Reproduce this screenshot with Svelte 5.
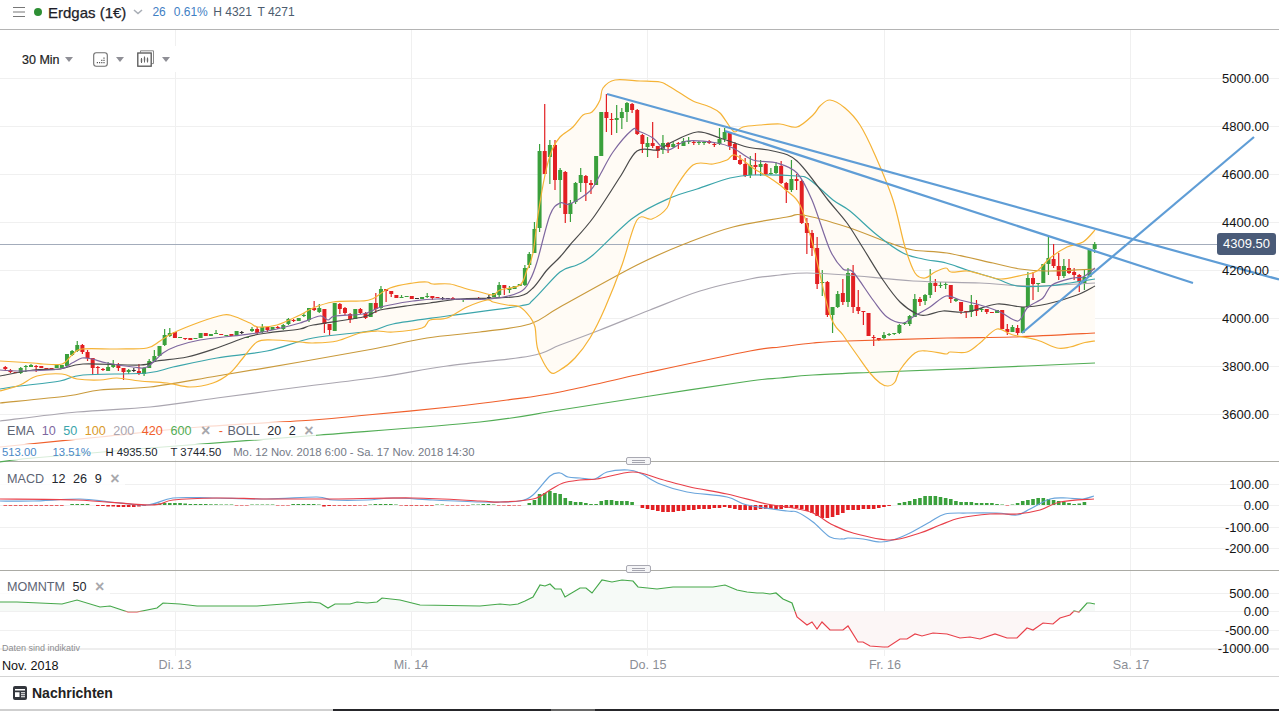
<script>
  // candle rows: colour, body top, body bottom, wick high, wick low (page y)
  const candleStep = 5.14;
  const candleRuns = [
    {
      x0: 5.3,
      rows: `r 367 369 366 371|r 370 372 369 373|r 372 373|g 368 373 367 374|g 366 367 365 372|g 365 367 364 367|r 366 367 365 372|r 366 368|r 368 369|r 368 369|g 364 368|g 365 368|g 354 366|g 351 355 350 356|g 345 351 341 352|r 345 352 344 354|r 352 358 350 361|r 358 368 358 375|r 367 368 366 374|r 369 370 368 371|g 367 371 362 371|g 364 367 360 368|r 365 368 363 371|r 368 372 368 380|g 370 372 369 374|k 370 371 368 372|r 371 373 364 375|g 368 374 367 376|g 361 368 359 368|g 356 361 350 362|g 346 356|g 335 345 329 346|g 333 336 328 337|r 332 338|g 337 338|r 338 339 338 340|r 338 340|g 338 339|g 333 338|r 333 336|g 334 336|g 333 334 330 334|r 334 335|g 335 336|r 334 336|g 331 336|k 332 333 331 334|g 337 338|g 329 331 327 332|r 329 333 327 334|g 327 332 324 333|r 327 330 327 332|g 327 330|r 327 328 326 329`,
    },
    {
      x0: 283.3,
      rows: `g 325 329 324 330|g 319 324 318 325|r 320 321 319 322|g 318 321|g 315 316 313 317|g 308 320 308 322|r 308 310 301 311|g 308 312 304 313|r 309 324 309 333|r 324 330 324 335|g 303 331|r 304 309 303 314|r 308 313 307 315|r 314 319 313 323|g 309 319|r 309 313 308 314|r 313 318 312 319|g 303 317|r 303 309 293 313|g 289 308 286 309|r 289 291 289 302|r 291 294 291 297|r 295 298|g 297 298 295 298|g 296 297|r 296 299|k 298 299|g 297 299|g 296 297 293 298|r 296 298 296 300|r 297 298|k 298 299 297 300|k 298 299|r 298 300 297 300|k 299 300|g 299 300 299 302|k 298 299|k 298 299|r 298 299 297 300|k 298 299|k 297 298 295 299|g 293 297|g 285 295 282 297|r 285 288 285 295|g 288 290 286 293|g 286 289|g 284 286|g 268 285 265 286`,
    },
    {
      x0: 529.3,
      rows: `g 254 265 252 268|g 229 253 222 253|g 151 228 144 232|r 151 174 104 174|g 145 157 140 184|r 145 180 140 190|g 170 180 168 208|r 172 214 171 223|g 203 214 200 222|g 183 202 182 204|g 175 183 168 192|r 176 183 175 201|r 183 185 180 194|g 156 185|g 112 156|r 112 118 94 132|r 119 120 113 135|g 118 120 105 133|g 112 118 108 129|g 103 112 102 122|r 104 110 103 113|r 110 134 109 135|r 135 144 134 153|g 143 147 137 157|r 143 146 122 148|r 146 151 146 158|g 143 150 135 154|r 143 147 142 153|g 144 147 142 148|r 143 144 142 149|g 141 146 138 146|g 141 142 137 144|r 142 143 141 145|g 142 143 141 145|g 142 143 141 145|r 141 143 140 144|r 144 145 142 147|g 139 144 128 145|g 132 139 128 142|r 133 146 132 150|r 144 160 142 160|r 160 164 155 165|r 164 176 158 177|g 165 175 156 178|r 165 167 153 175|g 164 167 160 176|r 164 174 163 175|g 173 174 168 175|g 166 173 162 174|r 166 183 161 184|r 183 190 182 203|g 179 190 160 192|r 179 181 174 190|r 181 223 180 224|r 223 233 218 254|r 233 248 230 256|r 248 284 237 289|g 282 283 270 296|r 282 315 281 317|g 307 315 307 333|g 294 307 291 308|r 293 302 279 305|g 273 302 268 307|r 273 307 265 313|r 307 311 290 314|r 311 312 311 325|r 313 336|r 337 338 335 346|r 338 340 338 341|g 335 338 332 339|g 334 335 333 336|g 333 334 333 335|g 325 333 324 334|g 323 324 322 325|g 316 324 315 326|g 299 317 294 317|r 299 302 297 306|g 295 301 294 305|g 283 295 269 298|r 283 286 279 292|g 285 286 282 288|g 284 285 282 289|r 285 299 285 303|g 299 301 298 302|r 302 311 302 314|r 311 312 311 318|g 305 312 295 317|r 305 311 300 316|g 309 310 308 312|r 309 312 309 314|r 312 313|g 310 313|r 310 329|r 329 332 324 335|g 327 332 325 332|r 328 333 325 335|g 307 333|g 278 307 272 308|r 278 284 272 300|g 283 284 283 292|g 264 283|g 258 264 235 275|r 259 266 244 268|r 266 276 253 280|g 266 276 259 278|r 268 273 259 274|r 272 275 268 280|r 275 282 274 292|g 277 283 270 290|g 249 277|g 244 249 242 253`,
    },
  ];

  const candleColors = { g: "#3aa03c", r: "#e21f23", k: "#333" };

  const candles = candleRuns.flatMap((run) =>
    run.rows.split("|").map((row, i) => {
      const [c, top, bottom, high, low] = row.split(" ");
      return {
        x: run.x0 + candleStep * i,
        color: candleColors[c],
        top: +top,
        height: Math.max(1, bottom - top),
        high: high ? +high : +top,
        low: low ? +low : +bottom,
      };
    }),
  );

  const bollUpper = "0,361 33,363 43,364 62,364 72,355 82,349 117,349 147,348 160,341 173,333 200,322 223,315 233,316 250,323 258,327 277,325 300,315 313,308 333,302 360,301 372,299 390,288 413,283 427,282 433,284 450,284 467,289 480,292 493,295 500,290 520,285 527,270 533,253 538,215 545,175 552,150 560,137 573,127 583,115 592,112 600,100 603,88 615,80 640,81 660,82 667,85 680,93 693,101 710,107 720,113 730,127 735,132 743,127 760,125 780,124 797,127 813,115 820,106 830,100 845,108 860,125 875,155 893,200 905,247 915,273 925,278 935,272 946,268 951,272 967,271 980,274 1000,279 1023,275 1037,271 1050,258 1067,247 1083,242 1095,230";
  const bollLower = "0,391 20,385 37,376 62,374 77,379 100,380 117,378 140,381 167,383 190,387 213,383 230,373 243,358 257,342 273,340 300,342 313,343 337,341 360,333 377,331 393,332 422,328 430,320 447,318 467,307 487,300 493,302 507,305 520,307 530,317 535,327 538,350 550,372 560,370 575,358 590,338 605,308 622,265 637,220 652,219 667,208 673,192 693,165 713,164 727,160 735,155 753,168 773,180 787,191 800,205 813,245 830,315 843,335 857,355 870,373 880,383 888,386 895,382 900,370 915,353 927,351 946,354 950,352 967,352 980,343 997,329 1013,335 1037,340 1057,348 1070,347 1083,343 1095,341";

  const priceLines = [
    { color: "#aaa6b0", pts: "0,421 77,412 150,407 217,398 300,387 380,377 447,366 530,356 560,345 600,330 650,310 700,291 750,279 780,275 807,273 847,275 913,281 980,283 1030,286 1095,283" },
    { color: "#f0602c", pts: "0,447 100,437 200,427 313,420 367,415 450,407 507,400 560,392 650,372 750,351 780,347 813,343 847,341 947,338 1013,337 1095,333" },
    { color: "#52ad55", pts: "0,462 33,458 150,448 320,435 480,422 560,410 650,396 750,381 780,378 813,375 880,372 980,368 1095,363" },
    { color: "#c99a3c", pts: "0,403 67,396 100,390 150,387 217,376 300,362 373,349 427,338 480,332 530,324 560,307 637,265 687,243 733,227 787,217 803,215 847,227 887,242 913,250 947,253 993,263 1020,269 1047,271 1095,269" },
    { color: "#3ba5ab", pts: "0,389 20,386 60,381 83,375 147,373 173,367 217,358 267,351 313,338 370,331 393,324 447,316 520,306 533,300 560,272 577,265 593,255 633,218 670,198 697,189 730,178 753,175 797,176 810,180 833,200 850,211 877,235 903,253 923,259 946,263 967,270 997,279 1017,286 1047,286 1070,283 1095,279" },
    { color: "#4a4a4a", pts: "0,376 33,370 60,369 83,364 140,365 157,361 187,357 217,348 247,337 267,333 300,329 313,325 363,317 380,310 413,305 430,303 460,299 493,298 520,296 533,288 547,270 560,257 570,245 593,218 620,177 637,151 658,150 670,143 697,132 720,138 747,147 773,151 797,161 828,200 847,223 863,248 883,280 900,302 917,314 927,315 943,311 967,312 997,304 1023,307 1047,304 1077,295 1095,286" },
    { color: "#7e679f", pts: "0,370 20,371 60,369 72,363 82,358 92,359 107,363 133,367 147,367 163,353 177,346 200,340 233,336 257,333 277,329 300,323 320,316 328,320 335,316 363,314 378,308 390,305 413,301 437,299 490,299 520,292 530,280 537,262 550,215 560,203 570,204 590,191 600,175 613,152 632,130 638,131 653,138 667,150 687,141 717,143 733,148 753,160 777,163 797,173 812,200 830,250 843,269 853,272 873,300 887,317 903,323 913,317 930,307 946,296 960,300 980,305 1000,312 1018,321 1028,307 1043,298 1052,285 1073,278 1083,277 1095,268" },
    { color: "#f5b336", pts: bollUpper },
    { color: "#f5b336", pts: bollLower },
  ];

  const macdBlue = "0,501 33,501 80,499 110,502 147,505 173,498 213,498 267,499 317,497 333,500 367,500 393,498 433,500 480,502 500,502 520,501 533,495 550,476 560,473 568,477 580,478 595,479 607,472 628,470 640,473 660,484 687,492 727,497 747,505 787,511 797,512 813,522 830,537 843,539 848,538 863,539 880,542 893,540 910,533 930,522 945,514 967,513 997,513 1017,515 1030,509 1050,499 1067,498 1083,499 1094,496";
  const macdRed = "0,499 77,500 150,505 173,500 217,498 267,499 333,499 413,498 480,501 500,502 533,499 550,490 563,483 580,480 597,479 633,472 660,479 690,487 727,494 767,504 793,508 813,513 833,525 853,533 890,540 920,533 940,525 960,518 990,514 1017,514 1040,510 1060,502 1094,499";

  const momentum = "0,602 17,602 62,604 77,600 100,607 110,606 128,612 137,612 157,608 163,603 180,604 197,606 257,606 310,602 320,603 328,608 335,604 350,604 357,602 367,603 377,602 382,598 400,600 420,605 480,606 500,604 510,605 518,604 525,601 533,597 540,585 545,586 550,584 555,589 561,589 565,597 580,588 586,588 592,593 602,580 612,582 622,580 633,581 638,587 657,589 673,587 713,587 725,585 737,590 747,592 757,593 763,593 770,594 776,593 783,599 792,603 797,617 807,625 812,622 817,629 822,622 830,630 843,630 848,626 858,642 863,642 870,646 883,647 888,647 900,639 907,639 915,634 922,636 933,633 947,634 960,638 970,637 980,639 995,634 1007,638 1017,638 1027,628 1033,630 1043,623 1053,624 1060,618 1070,615 1074,611 1079,612 1087,603 1090,603 1095,604";

  const histLeft = [-0.7, -0.7, -0.7, -0.7, -0.7, -0.7, -0.7, -0.7, -0.7, -0.7, -0.7, -0.7, 0, 1, 1, 1, 1, 0, -1, -1, -1.5, -1.5, -2, -2, -2, -2, -1.5, -1, 0, 1, 1.5, 2, 2, 2, 2, 1.5, 1, 1, 1, 1, 0.7, 0.7, 0.5, 0.5, 0.5, -0.5, -0.5, -0.5, 0.5, 0.5, 0.5, 0.5, 0.5, -0.5, -0.5, -0.5, 1, 1, 1, 1, 1, 0.5, -1.5, -1, -0.7, -0.7, -0.7, -0.7, -0.7, -0.5, -0.5, 0.5, 1, 1, 1, 1, 0.5, -0.5, -0.7, -0.7, -0.7, -0.7, -0.7, -0.7, 0.5, 0.5, -0.5, -0.5, -0.5, -0.5, -0.5, 0.5, 0.5, 1, 1, 0.5, -0.5, -0.5, -0.7, -0.5, -0.5];
  const histMain = [2, 5, 11, 12, 14, 12, 11, 7, 4, 3, 3, 2, 1, 1, 4, 5, 5, 4, 4, 4, 3, 0, -3, -4, -5, -6, -7, -7, -7, -6, -6, -5, -5, -4, -4, -4, -3, -3, -2, -3, -4, -5, -5, -5, -5, -4, -4, -4, -4, -4, -3, -3, -3, -4, -6, -8, -11, -13, -13, -12, -10, -8, -5, -5, -5, -4, -4, -4, -3, -2, -1, 0, 2, 3, 4, 6, 7, 9, 9, 9, 8, 7, 6, 4, 3, 3, 3, 2, 2, 2, 2, 1, 0.5, -0.5, 0.5, 2, 4, 5, 6, 7, 7, 6, 5, 4, 3, 2, 1, 1.5, 3];

  const histBars = [
    ...histLeft.map((v, i) => ({ x: 5.3 + candleStep * i, v })),
    ...histMain.map((v, i) => ({ x: 529.3 + candleStep * i, v })),
  ].filter((b) => b.v !== 0);

  const priceTicks = [
    [78, "5000.00"], [126, "4800.00"], [174, "4600.00"], [222, "4400.00"],
    [270, "4200.00"], [318, "4000.00"], [366, "3800.00"], [414, "3600.00"],
  ];
  const macdTicks = [[484, "100.00"], [505, "0.00"], [527, "-100.00"], [548, "-200.00"]];
  const momTicks = [[593, "500.00"], [611, "0.00"], [630, "-500.00"], [648, "-1000.00"]];
  const dayLines = [175.5, 411.5, 647.5, 884.5, 1130.5];
  const dayLabels = [[175, "Di. 13"], [411, "Mi. 14"], [648, "Do. 15"], [885, "Fr. 16"], [1131, "Sa. 17"]];

  // catmull-rom through the read-off points, so the curves don't look like polygons
  function smooth(str) {
    const p = str.split(" ").map((s) => s.split(",").map(Number));
    let d = `M${p[0][0]} ${p[0][1]}`;
    for (let i = 0; i < p.length - 1; i++) {
      const a = p[i - 1] || p[i];
      const b = p[i];
      const c = p[i + 1];
      const e = p[i + 2] || c;
      const c1x = b[0] + (c[0] - a[0]) / 6;
      const c1y = b[1] + (c[1] - a[1]) / 6;
      const c2x = c[0] - (e[0] - b[0]) / 6;
      const c2y = c[1] - (e[1] - b[1]) / 6;
      d += `C${c1x.toFixed(1)} ${c1y.toFixed(1)} ${c2x.toFixed(1)} ${c2y.toFixed(1)} ${c[0]} ${c[1]}`;
    }
    return d;
  }

  const band = `${bollUpper} ${bollLower.split(" ").reverse().join(" ")}`;
  const momArea = `0,611 ${momentum} 1095,611`;
</script>

<div class="page">
  <header class="topbar">
    <svg class="burger" width="12" height="10" viewBox="0 0 12 10">
      <path d="M0 .5h12M0 5h12M0 9.5h12" stroke="#777" fill="none" />
    </svg>
    <span class="dot"></span>
    <span class="name">Erdgas (1€)</span>
    <svg class="chev" width="10" height="6" viewBox="0 0 10 6">
      <path d="M1 1l4 3.5L9 1" stroke="#a9aeb6" stroke-width="1.6" fill="none" />
    </svg>
    <span class="quote up first">26</span>
    <span class="quote up">0.61%</span>
    <span class="quote">H 4321</span>
    <span class="quote">T 4271</span>
  </header>

  <section class="pane main">
    <svg width="1279" height="431" viewBox="0 30 1279 431">
      {#each dayLines as x}
        <line x1={x} x2={x} y1="30" y2="461" class="grid" />
      {/each}
      {#each priceTicks as [y]}
        <line x1="0" x2="1279" y1={y + 0.5} y2={y + 0.5} class="grid" />
      {/each}
      <polygon points={band} fill="#fffbf5" />
      <line x1="0" x2="1217" y1="244.5" y2="244.5" stroke="#a3acbb" />
      {#each candles as c}
        <line x1={c.x} x2={c.x} y1={c.high} y2={c.low} stroke={c.color} stroke-width="1.2" />
        <rect x={c.x - 2} y={c.top} width="4" height={c.height} fill={c.color} />
      {/each}
      {#each priceLines as l}
        <path d={smooth(l.pts)} fill="none" stroke={l.color} stroke-width="1.2" />
      {/each}
      <g class="trend">
        <line x1="607" y1="94" x2="1279" y2="279.5" />
        <line x1="725" y1="131" x2="1193" y2="283" />
        <line x1="1022" y1="333" x2="1254" y2="137" />
      </g>
      {#each priceTicks as [y, label]}
        <text x="1269" y={y + 5} text-anchor="end" class="tick">{label}</text>
      {/each}
    </svg>

    <div class="last-price">4309.50</div>

    <div class="tools">
      <span class="range">30 Min</span>
      <span class="caret"></span>
      <svg class="ico first" width="15" height="15" viewBox="0 0 15 15">
        <rect x=".7" y=".7" width="13.6" height="13.6" rx="2.5" fill="none" stroke="#6e6e6e" stroke-width="1.1" />
        <path d="M6 10h1.2v1.2H6zM8.2 10h1.2v1.2H8.2zM10.4 10h1.2v1.2h-1.2zM8.2 7.8h1.2V9H8.2zM10.4 7.8h1.2V9h-1.2zM3.8 10H5v1.2H3.8zM10.4 5.6h1.2v1.2h-1.2z" fill="#555" />
      </svg>
      <span class="caret"></span>
      <svg class="ico second" width="17" height="17" viewBox="0 0 17 17">
        <path d="M3.5 2.5V.8h13v12.8h-2" fill="none" stroke="#8a8a8a" />
        <rect x=".8" y="3" width="13.4" height="13.2" fill="#fff" stroke="#555" stroke-width="1.3" />
        <path d="M4.5 8v5M7.5 6.5v6M10.5 7.5v5" stroke="#666" fill="none" />
        <path d="M3.8 9h1.4v3H3.8zM6.8 7.5h1.4v3H6.8zM9.8 8.5h1.4v3H9.8z" fill="#666" />
      </svg>
      <span class="caret"></span>
    </div>

    <div class="legend ema">
      <span class="lab">EMA</span>
      <span class="c10">10</span>
      <span class="c50">50</span>
      <span class="c100">100</span>
      <span class="c200">200</span>
      <span class="c420">420</span>
      <span class="c600">600</span>
      <span class="x">×</span>
      <span class="dash">-</span>
      <span class="lab boll">BOLL</span>
      <span class="dark">20</span>
      <span class="dark">2</span>
      <span class="x">×</span>
    </div>

    <div class="stats">
      <span class="up">513.00</span>
      <span class="up pct">13.51%</span>
      <span class="dark">H 4935.50</span>
      <span class="dark">T 3744.50</span>
      <span class="span">Mo. 12 Nov. 2018 6:00 - Sa. 17 Nov. 2018 14:30</span>
    </div>
  </section>

  <section class="pane macd">
    <svg width="1279" height="108" viewBox="0 462 1279 108">
      {#each dayLines as x}
        <line x1={x} x2={x} y1="462" y2="570" class="grid" />
      {/each}
      {#each macdTicks as [y]}
        <line x1="0" x2="1279" y1={y + 0.5} y2={y + 0.5} class="grid" />
      {/each}
      {#each histBars as b}
        <rect
          x={b.x - 1.8}
          y={b.v > 0 ? 505 - b.v : 505}
          width="3.6"
          height={Math.abs(b.v)}
          fill={b.v > 0 ? "#3aa03c" : "#e21f23"}
        />
      {/each}
      <path d={smooth(macdBlue)} fill="none" stroke="#6aa5dc" stroke-width="1.2" />
      <path d={smooth(macdRed)} fill="none" stroke="#e8404a" stroke-width="1.2" />
      {#each macdTicks as [y, label]}
        <text x="1269" y={y + 5} text-anchor="end" class="tick">{label}</text>
      {/each}
    </svg>
    <div class="legend short">
      <span class="lab">MACD</span>
      <span class="dark">12</span>
      <span class="dark">26</span>
      <span class="dark">9</span>
      <span class="x">×</span>
    </div>
    <div class="handle"></div>
  </section>

  <section class="pane mom">
    <svg width="1279" height="80" viewBox="0 571 1279 80">
      <defs>
        <clipPath id="above"><rect x="0" y="571" width="1279" height="40.5" /></clipPath>
        <clipPath id="below"><rect x="0" y="611.5" width="1279" height="40" /></clipPath>
      </defs>
      {#each dayLines as x}
        <line x1={x} x2={x} y1="571" y2="656" class="grid" />
      {/each}
      {#each momTicks as [y]}
        <line x1="0" x2="1279" y1={y + 0.5} y2={y + 0.5} class="grid" />
      {/each}
      <rect x="0" y="648" width="1279" height="2" fill="#eeeeee" />
      <polygon points={momArea} fill="#f6faf7" clip-path="url(#above)" />
      <polygon points={momArea} fill="#fcf6f6" clip-path="url(#below)" />
      <polyline points={momentum} fill="none" stroke="#46a84b" stroke-width="1.2" clip-path="url(#above)" />
      <polyline points={momentum} fill="none" stroke="#e8404a" stroke-width="1.2" clip-path="url(#below)" />
      {#each momTicks as [y, label]}
        <text x="1269" y={y + 5} text-anchor="end" class="tick">{label}</text>
      {/each}
    </svg>
    <div class="legend short">
      <span class="lab">MOMNTM</span>
      <span class="dark">50</span>
      <span class="x">×</span>
    </div>
    <div class="handle"></div>
    <span class="note">Daten sind indikativ</span>
  </section>

  <div class="time">
    <span class="month">Nov. 2018</span>
    <svg width="1279" height="25" viewBox="0 651 1279 25">
      {#each dayLabels as [x, label]}
        <text {x} y="669" text-anchor="middle" class="day">{label}</text>
      {/each}
    </svg>
  </div>

  <div class="news">
    <svg width="14" height="14" viewBox="0 0 14 14">
      <rect width="14" height="14" rx="2" fill="#33363d" />
      <path d="M2 3h10v1.6H2zM2 6.2h4.5v4.8H2zM8 6.2h4v1H8zM8 8.2h4v1H8zM8 10.2h4v1H8z" fill="#fff" />
    </svg>
    <span>Nachrichten</span>
  </div>
  <div class="strip"><span class="lit"></span></div>
</div>

<style>
  :global(body) {
    background: #fff;
    overflow: hidden;
  }

  .page {
    width: 1279px;
    height: 711px;
    font-family: "Liberation Sans", Arial, sans-serif;
    color: #222;
    overflow: hidden;
  }

  .topbar {
    display: flex;
    align-items: center;
    height: 29px;
    padding: 0 0 5px 13px;
    box-sizing: border-box;
    box-shadow: 0 1px 0 #b4b4b4;
  }
  .burger {
    margin-right: 9px;
  }
  .dot {
    width: 8px;
    height: 8px;
    border-radius: 50%;
    background: #2d8f34;
    margin-right: 6px;
  }
  .name {
    font-size: 15px;
    color: #1d1d28;
    -webkit-text-stroke: 0.25px #1d1d28;
    margin-right: 7px;
  }
  .quote {
    font-size: 12px;
    color: #4c5c6e;
    margin-left: 5.5px;
  }
  .quote.up {
    color: #3f80c4;
  }
  .quote.first {
    margin-left: 9px;
    margin-right: 2.5px;
  }

  .pane {
    position: relative;
    border-bottom: 1px solid #ababa5;
  }
  .pane.main {
    margin-top: 1px;
    height: 431px;
  }
  .pane.macd {
    height: 108px;
  }
  .pane.mom {
    height: 80px;
    border-bottom: 0;
  }
  .pane svg {
    display: block;
    overflow: visible;
  }

  .grid {
    stroke: #f0f0f0;
    stroke-width: 1;
  }
  .trend line {
    stroke: #5f9dd6;
    stroke-width: 2.2;
  }
  .tick {
    font-size: 13px;
    fill: #141414;
  }

  .last-price {
    position: absolute;
    left: 1217px;
    top: 203px;
    width: 59px;
    height: 22px;
    border-radius: 3px;
    background: #4a5b78;
    color: #fff;
    font-size: 13px;
    line-height: 22px;
    text-align: center;
  }

  .tools {
    position: absolute;
    left: 0;
    top: 16px;
    width: 176px;
    height: 26px;
    background: #fff;
    display: flex;
    align-items: center;
    padding: 1px 0 0 22px;
    box-sizing: border-box;
  }
  .range {
    font-size: 12.5px;
    color: #222;
    -webkit-text-stroke: 0.2px #222;
    margin-right: 5px;
  }
  .caret {
    width: 0;
    height: 0;
    border-left: 4.5px solid transparent;
    border-right: 4.5px solid transparent;
    border-top: 5px solid #8f8f96;
  }
  .ico.first {
    margin: 0 8px 0 20px;
  }
  .ico.second {
    margin: -2px 8px 0 13px;
  }

  .legend {
    position: absolute;
    left: 0;
    display: flex;
    align-items: center;
    gap: 7.5px;
    height: 18px;
    padding: 0 6px 0 7px;
    font-size: 12.6px;
    background: rgba(255, 255, 255, 0.78);
  }
  .legend.ema {
    top: 392px;
    width: 316px;
    box-sizing: border-box;
  }
  .legend.short {
    top: 8px;
  }
  .mom .legend.short {
    top: 7px;
  }
  .lab {
    color: #5d6474;
  }
  .boll {
    margin-left: -3px;
  }
  .dark {
    color: #23262e;
  }
  .c10 { color: #7e679f; }
  .c50 { color: #3ba5ab; }
  .c100 { color: #d99a2a; }
  .c200 { color: #aaa6b0; }
  .c420 { color: #f0602c; }
  .c600 { color: #52ad55; }
  .x {
    color: #a8a8ac;
    font-size: 16px;
    font-weight: bold;
    line-height: 1;
    margin-left: 1px;
  }
  .c600 + .x {
    margin-left: 2px;
  }
  .dash {
    color: #f0602c;
    margin-left: 1px;
  }

  .stats {
    position: absolute;
    left: 0;
    top: 414px;
    display: flex;
    gap: 13px;
    font-size: 11.3px;
    height: 16px;
    align-items: center;
    background: rgba(255, 255, 255, 0.78);
    padding: 0 6px 0 2px;
  }
  .up {
    color: #4a88c7;
  }
  .pct {
    margin: 0 1.5px 0 3px;
  }
  .span {
    color: #747a86;
    margin-left: -1px;
  }

  .handle {
    position: absolute;
    left: 626px;
    width: 25px;
    height: 8px;
    box-sizing: border-box;
    border: 1px solid #a9a9b2;
    border-radius: 2px;
    background: linear-gradient(#a4a4ae, #a4a4ae) center 2px / 13px 1px no-repeat,
      linear-gradient(#a4a4ae, #a4a4ae) center 4px / 13px 1px no-repeat, #f5f5f7;
    z-index: 2;
  }
  .mom .handle {
    top: -6px;
  }
  .macd .handle {
    top: -5px;
  }

  .note {
    position: absolute;
    left: 2px;
    top: 72px;
    font-size: 9px;
    color: #8d8d90;
  }

  .time {
    position: relative;
    height: 25px;
    border-bottom: 1px solid #d4d4d4;
  }
  .time svg {
    display: block;
  }
  .month {
    position: absolute;
    left: 2px;
    top: 8px;
    font-size: 12.6px;
    color: #111;
  }
  .day {
    font-size: 12.6px;
    fill: #8b8e95;
  }

  .news {
    display: flex;
    align-items: center;
    gap: 5px;
    height: 32px;
    padding-left: 13px;
  }
  .news span {
    font-size: 14px;
    font-weight: bold;
    color: #222;
  }
  .strip {
    height: 2px;
    background: linear-gradient(90deg, #cfcfcf 333px, #26262a 333px);
    position: relative;
  }
  .lit {
    position: absolute;
    left: 551px;
    top: 0;
    width: 44px;
    height: 2px;
    background: #666;
  }
</style>
